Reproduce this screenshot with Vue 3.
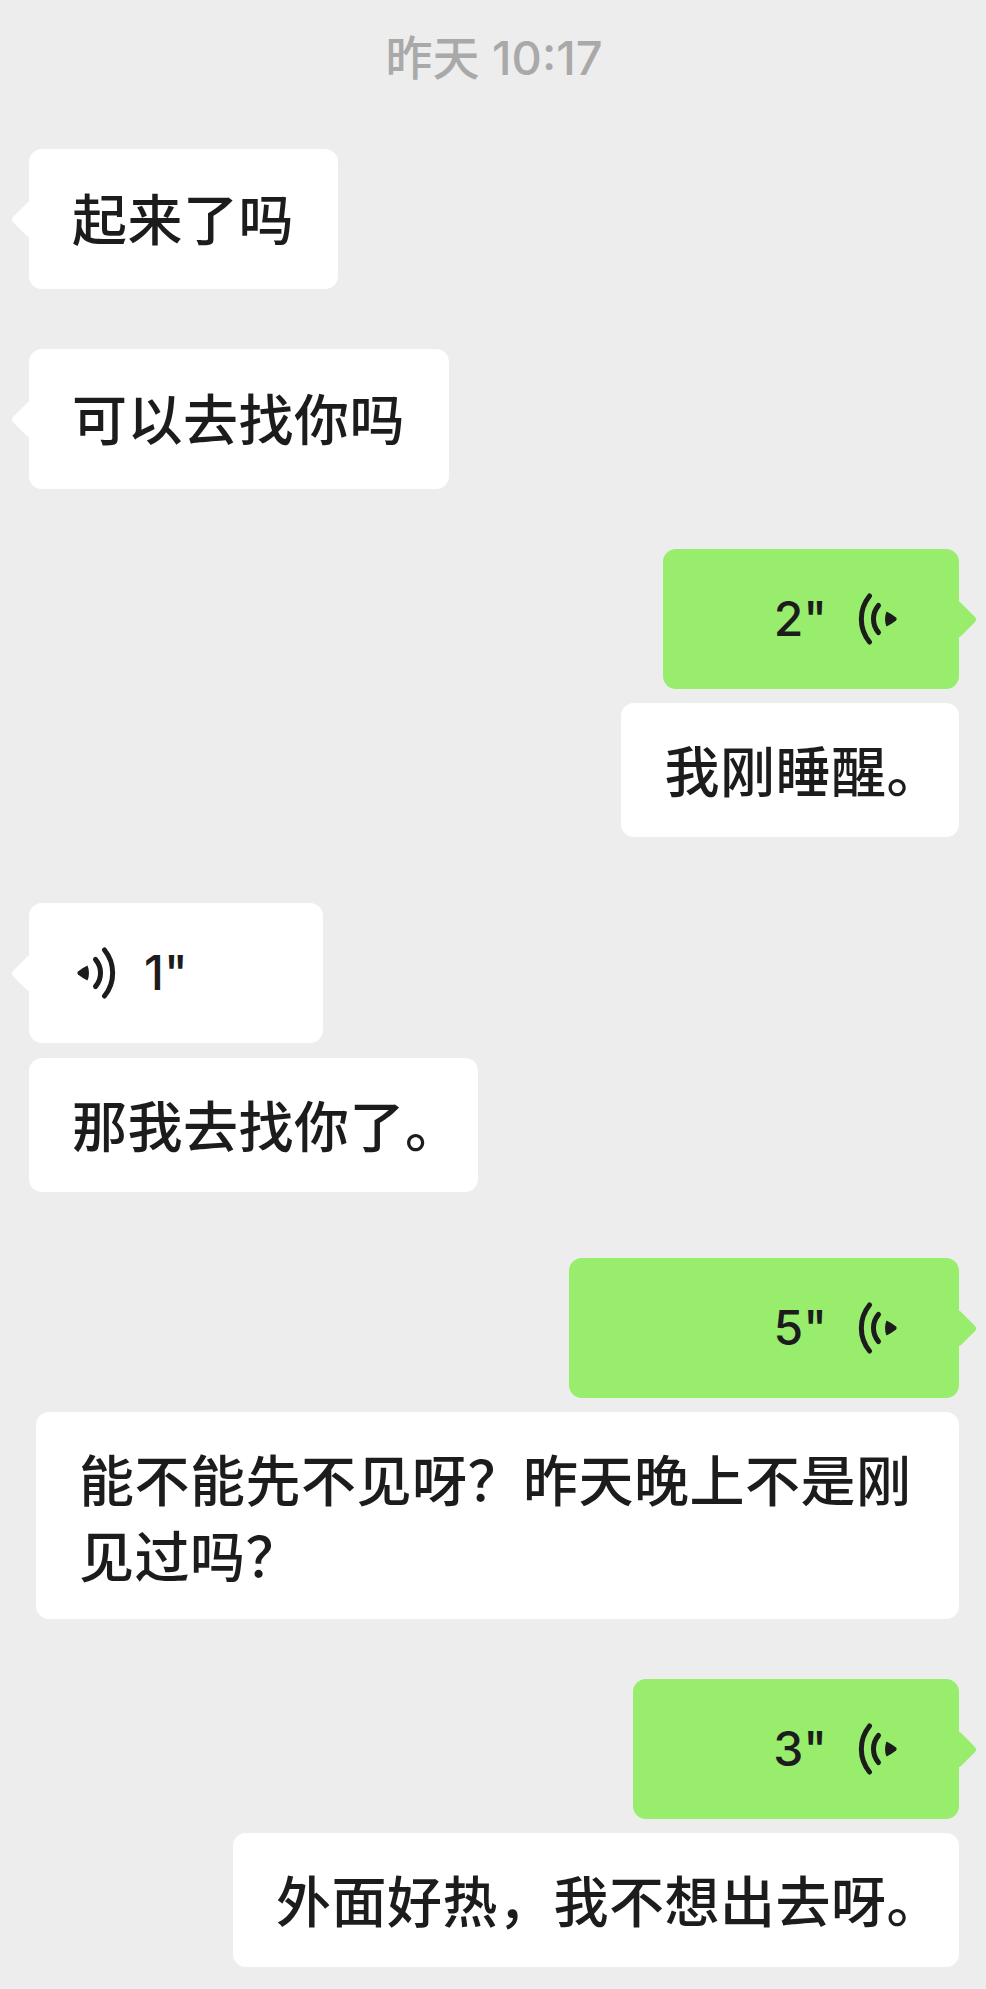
<script setup>
const groups = [
  { side: 'left', items: [{ text: '起来了吗', tall: true }] },
  { side: 'left', items: [{ text: '可以去找你吗', tall: true }] },
  {
    side: 'right',
    items: [{ voice: '2"', width: 296 }, { text: '我刚睡醒。', trim: true }]
  },
  {
    side: 'left',
    wide: true,
    items: [{ voice: '1"', width: 294 }, { text: '那我去找你了。', trim: true }]
  },
  {
    side: 'right',
    wide: true,
    items: [{ voice: '5"', width: 390 }, { text: '能不能先不见呀？昨天晚上不是刚见过吗？', long: true }]
  },
  {
    side: 'right',
    items: [{ voice: '3"', width: 326 }, { text: '外面好热，我不想出去呀。', trim: true }]
  }
]
</script>

<template>
  <div class="page">
    <div class="time">昨天 10:17</div>
    <div class="chat">
      <div
        v-for="(group, i) in groups"
        :key="i"
        class="group"
        :class="[group.side, { wide: group.wide }]"
      >
        <template v-for="(item, j) in group.items" :key="j">
          <div v-if="item.voice" class="bubble voice" :style="{ width: item.width + 'px' }">
            <svg class="wave" viewBox="0 0 40 52" width="40" height="52">
              <path d="M11.5 3A36.5 36.5 0 0 0 11.5 49" />
              <path d="M20.5 12.5A20.7 20.7 0 0 0 20.5 39.5" />
              <path class="dot" d="M28.5 18.500Q33 20.500 38 24.500Q39.500 26 38 27.500Q33 31.500 28.500 33.500Q25.500 26 28.500 18.500Z" />
            </svg>
            <span class="secs">{{ item.voice }}</span>
          </div>
          <div
            v-else
            class="bubble text"
            :class="{ tall: item.tall, trim: item.trim, long: item.long }"
          >{{ item.text }}</div>
        </template>
      </div>
    </div>
  </div>
</template>

<style>
html, body { background: #ededed; }
</style>

<style scoped>
.page {
  background: #ededed;
  padding: 0 27px 22px 29px;
  font-family: "Noto Sans CJK SC", "Liberation Sans", sans-serif;
  color: #1c1c1c;
}
.time {
  height: 115px;
  line-height: 115px;
  text-align: center;
  font-family: Inter, "Noto Sans CJK SC", sans-serif;
  font-size: 47px;
  font-weight: 500;
  color: #a9a9a9;
}
.chat {
  display: flex;
  flex-direction: column;
  gap: 60px;
  padding-top: 34px;
}
.group {
  display: flex;
  flex-direction: column;
  gap: 14px;
}
.group.wide { margin-top: 6px; }
.group.left { align-items: flex-start; gap: 15px; }
.group.right { align-items: flex-end; }
.bubble {
  position: relative;
  box-sizing: border-box;
  border-radius: 13px;
  background: #fff;
}
.text {
  max-width: 923px;
  padding: 28px 44px 31px 43px;
  font-size: 55px;
  font-weight: 500;
  line-height: 75px;
  letter-spacing: 0.5px;
}
.text.tall { padding-top: 30px; padding-bottom: 35px; }
.text.trim { padding-right: 17px; }
.text.long { padding-top: 27px; padding-bottom: 28px; line-height: 76px; }
.voice {
  display: flex;
  align-items: center;
  height: 140px;
  font-family: Inter, "Liberation Sans", sans-serif;
  font-size: 48px;
  font-weight: 500;
}
.secs { line-height: 1; }
.wave { flex: none; }
.wave path {
  fill: none;
  stroke: #1c1c1c;
  stroke-width: 5;
  stroke-linecap: round;
}
.wave path.dot { fill: #1c1c1c; stroke: none; }
.voice::after,
.tall::after {
  content: "";
  position: absolute;
  top: 50%;
  width: 27px;
  height: 27px;
  margin-top: -13.5px;
  border-radius: 4px;
  background: inherit;
  transform: rotate(45deg);
}
.left .voice {
  gap: 28px;
  padding-left: 47px;
}
.left .voice::after,
.left .tall::after { left: -13px; }
.right .voice {
  flex-direction: row-reverse;
  gap: 31px;
  padding-right: 61px;
  background: #98ed6d;
}
.right .voice::after { right: -13px; }
.left .wave { transform: scaleX(-1); }
</style>
